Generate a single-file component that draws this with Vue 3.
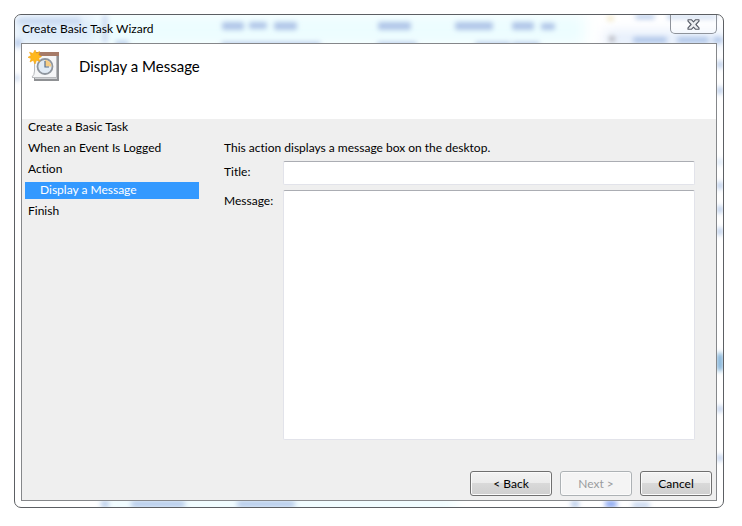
<template>
  <div class="desktop">
    <section class="window" aria-labelledby="window-title">
      <svg class="glass" viewBox="0 0 708 492" preserveAspectRatio="none" aria-hidden="true">
        <defs>
          <filter id="soft" x="-40%" y="-100%" width="180%" height="300%">
            <feGaussianBlur stdDeviation="2.500" />
          </filter>
          <filter id="wide" x="-20%" y="-60%" width="140%" height="220%">
            <feGaussianBlur stdDeviation="7" />
          </filter>
        </defs>
        <g filter="url(#wide)">
          <rect v-for="(t, i) in tints" :key="i" :x="t[0]" :y="t[1]" :width="t[2]" :height="t[3]" :fill="t[4]" />
        </g>
        <g filter="url(#soft)">
          <rect v-for="(s, i) in smudges" :key="i" :x="s[0]" :y="s[1]" :width="s[2]" :height="s[3]" :fill="s[4] || '#b0c6e8'" rx="2" />
        </g>
      </svg>

      <header class="titlebar">
        <h1 id="window-title">Create Basic Task Wizard</h1>
        <button class="close" type="button" aria-label="Close">
          <svg width="13" height="11" viewBox="0 0 13 11">
            <path d="M1 .8h3.600l1.900 2 1.900-2H12v1.400L8.900 5.500 12 8.800v1.400H8.400l-1.900-2-1.900 2H1V8.800l3.100-3.300L1 2.200z" fill="#eceef1" stroke="#555a65" stroke-width="1.100" stroke-linejoin="round" />
          </svg>
        </button>
      </header>

      <div class="client">
        <div class="banner">
          <svg class="task-icon" width="33" height="33" viewBox="0 0 33 33" aria-hidden="true">
            <path d="M6 3h25v28H6z" fill="#8f9194" />
            <path d="M7 4h22v25H7z" fill="#cfd1d3" />
            <path d="M6 4h22v23.500H4q2-2 2-6z" fill="#f5f6f7" />
            <path d="M4 27.500h24.500V6M6.500 12v9q0 4-2.500 6" fill="none" stroke="#b9bbbe" />
            <path d="M6 2h25v4H6z" fill="#a67b68" />
            <circle cx="17" cy="16.500" r="7.500" fill="#e1ebf5" stroke="#8f969e" stroke-width="1.800" />
            <path d="M17 16.500v-6.500a6.500 6.500 0 0 1 6.500 6.500z" fill="#f6cc83" />
            <path d="M17 11v6h4" fill="none" stroke="#58708d" stroke-width="1.200" />
            <path d="M7 0 8.500 3.200 11.500 1.500 10.700 5 13.500 6.500 10.700 8.200 12 11.500 8.500 10.200 7 14 5.300 10.200 2 12 3.200 8.600 0 7.300 3.100 5.400 1.500 2.300 5.100 3.500z" fill="#ffb81c" stroke="#f3a414" stroke-width=".6" />
          </svg>
          <h2>Display a Message</h2>
        </div>

        <div class="body">
          <nav class="steps" aria-label="Wizard steps">
            <ul>
              <li
                v-for="step in steps"
                :key="step.name"
                :class="{ sub: step.sub, active: step.sub }"
                :aria-current="step.sub ? 'step' : null"
              >{{ step.name }}</li>
            </ul>
          </nav>

          <form id="message-form" class="fields" @submit.prevent>
            <p>This action displays a message box on the desktop.</p>
            <label for="title">Title:</label>
            <input id="title" v-model="title" type="text">
            <label for="message">Message:</label>
            <textarea id="message" v-model="message"></textarea>
          </form>
        </div>

        <footer class="actions">
          <button class="btn back" type="button">&lt; Back</button>
          <button class="btn" type="submit" form="message-form" :disabled="!canContinue">Next &gt;</button>
          <button class="btn" type="button">Cancel</button>
        </footer>
      </div>
    </section>
  </div>
</template>

<script setup>
import { ref, computed } from 'vue'

const steps = [
  { name: 'Create a Basic Task' },
  { name: 'When an Event Is Logged' },
  { name: 'Action' },
  { name: 'Display a Message', sub: true },
  { name: 'Finish' }
]

const title = ref('')
const message = ref('')
const canContinue = computed(() => message.value.trim() !== '')

// x, y, width, height, colour of what shows through the glass frame
const tints = [
  [0, 0, 80, 30, '#dcebfa'],
  [80, 0, 490, 30, '#ecfdff'],
  [590, 18, 120, 12, '#dce8fa'],
  [90, 484, 350, 10, '#e4faff']
]
const smudges = [
  [2, 3, 64, 6, '#c8d8ef'],
  [87, 0, 6, 28, '#cfdcf2'],
  [0, 24, 6, 8],
  [0, 60, 4, 6],
  [100, 26, 14, 4],
  [207, 7, 22, 8],
  [234, 7, 18, 7],
  [259, 7, 23, 8],
  [206, 27, 100, 4],
  [363, 7, 33, 8],
  [362, 27, 40, 4],
  [440, 7, 38, 8],
  [460, 27, 36, 4],
  [497, 7, 22, 8],
  [526, 8, 14, 7],
  [497, 27, 28, 4],
  [592, 1, 7, 5, '#f3e8c8'],
  [594, 21, 6, 6, '#b5b6bd'],
  [620, 0, 20, 4],
  [652, 0, 50, 4],
  [618, 22, 34, 6],
  [662, 22, 32, 6],
  [698, 22, 10, 6],
  [702, 46, 6, 7],
  [702, 72, 6, 7],
  [702, 144, 6, 6, '#d3e3f7'],
  [702, 167, 6, 7],
  [702, 191, 6, 7],
  [702, 213, 6, 7],
  [702, 338, 6, 18, '#71a9d4'],
  [702, 391, 6, 6],
  [702, 440, 6, 6],
  [86, 486, 8, 6],
  [116, 486, 54, 6],
  [222, 486, 58, 6],
  [556, 486, 8, 6],
  [590, 486, 12, 6, '#7c9cf0'],
  [617, 488, 18, 4]
]
</script>

<style>
body {
  margin: 0;
  background: #fff;
}
</style>

<style scoped>
.desktop {
  box-sizing: border-box;
  display: flex;
  min-height: 100vh;
  padding: 14px 18px 18px 14px;
  font: 12px/17px Lato, "Open Sans", sans-serif;
  font-variant-ligatures: none;
  color: #000;
}
.window {
  position: relative;
  box-sizing: border-box;
  display: flex;
  flex: 1;
  flex-direction: column;
  padding: 0 6px 6px;
  border: 1px solid #5c5f63;
  border-radius: 7px;
  background: #fff;
  overflow: hidden;
}
.glass {
  position: absolute;
  inset: 0;
  width: 100%;
  height: 100%;
}
.titlebar {
  position: relative;
  display: flex;
  justify-content: space-between;
  align-items: flex-start;
  height: 28px;
}
h1 {
  margin: 0;
  padding: 5px 1px;
  font-size: 12px;
  font-weight: 400;
}
.close {
  display: flex;
  justify-content: center;
  align-items: center;
  box-sizing: border-box;
  width: 47px;
  height: 19px;
  padding: 0;
  border: 1px solid #8e939b;
  border-top: 0;
  border-radius: 0 0 5px 5px;
  background: rgba(255, 255, 255, 0.4);
}
.client {
  position: relative;
  display: flex;
  flex: 1;
  flex-direction: column;
  border: 1px solid #85878a;
  background: #efefef;
}
.banner {
  display: flex;
  align-items: flex-start;
  gap: 18px;
  box-sizing: border-box;
  height: 75px;
  padding: 6px;
  background: #fff;
}
h2 {
  margin: 0;
  padding-top: 5px;
  font-size: 15px;
  line-height: 22px;
  font-weight: 400;
}
.body {
  display: flex;
  flex: 1;
  gap: 25px;
  padding: 0 21px 0 3px;
}
.steps {
  width: 174px;
}
.steps ul {
  display: flex;
  flex-direction: column;
  gap: 4px;
  margin: 0;
  padding: 0;
  list-style: none;
}
.steps li {
  padding: 0 0 2px 3px;
  line-height: 15px;
}
.steps .sub {
  padding-left: 15px;
}
.steps .active {
  background: #3399ff;
  color: #fff;
}
.fields {
  display: grid;
  flex: 1;
  grid-template-columns: 51px 1fr;
  grid-template-rows: 17px 24px 1fr;
  gap: 5px 8px;
  padding-top: 20px;
}
.fields p {
  grid-column: 1 / -1;
  margin: 0;
}
.fields label {
  padding-top: 2px;
  white-space: nowrap;
}
.fields input,
.fields textarea {
  box-sizing: border-box;
  width: 100%;
  margin: 0;
  padding: 2px 4px;
  border: 1px solid #e2e3ea;
  border-top-color: #abadb3;
  border-radius: 2px;
  background: #fff;
  font: inherit;
  resize: none;
  outline: 0;
}
.fields input:focus,
.fields textarea:focus {
  border-color: #5794bf #b7d5ea #b7d5ea;
}
.actions {
  display: flex;
  justify-content: flex-end;
  gap: 8px;
  padding: 31px 4px 4px;
}
.btn {
  box-sizing: border-box;
  width: 72px;
  height: 25px;
  padding: 0;
  border: 1px solid #707070;
  border-radius: 3px;
  background: linear-gradient(#f3f3f3, #ebebeb 50%, #d9d9d9 50%, #cfcfcf);
  box-shadow: inset 0 0 0 1px #fbfbfb;
  font: inherit;
  color: #000;
}
.btn.back {
  width: 82px;
}
.btn:disabled {
  border-color: #adb2b5;
  background: #f4f4f4;
  color: #9a9c9e;
}
</style>
